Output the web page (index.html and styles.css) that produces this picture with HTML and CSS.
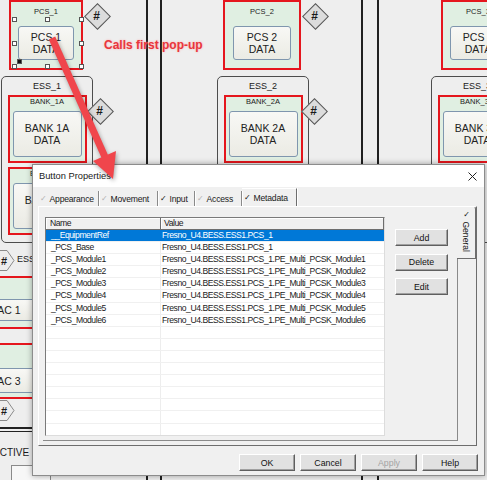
FILE: index.html
```html
<!DOCTYPE html>
<html lang="en">
<head>
    <meta charset="UTF-8" />
    <title>Button Properties</title>
    <link rel="stylesheet" href="styles.css">
</head>
<body>
<div class="hmi">
    <!-- canvas -->
    <div class="vline vline-a"></div>
    <div class="vline vline-b"></div>
    <div class="vline vline-c"></div>
    <div class="vline vline-d"></div>

    <div class="node pcs pcs-1">
        <div class="node-label">PCS_1</div>
        <div class="node-btn">PCS 1<br>DATA</div>
    </div>
    <div class="node pcs pcs-2">
        <div class="node-label">PCS_2</div>
        <div class="node-btn">PCS 2<br>DATA</div>
    </div>
    <div class="node pcs pcs-3">
        <div class="node-label">PCS_3</div>
        <div class="node-btn">PCS 3<br>DATA</div>
    </div>

    <div class="group ess-1">
        <div class="group-label">ESS_1</div>
        <div class="node bank">
            <div class="node-label">BANK_1A</div>
            <div class="node-btn">BANK 1A<br>DATA</div>
        </div>
        <div class="node bank">
            <div class="node-label">BANK_1B</div>
            <div class="node-btn">BANK 1B<br>DATA</div>
        </div>
    </div>
    <div class="group ess-2">
        <div class="group-label">ESS_2</div>
        <div class="node bank">
            <div class="node-label">BANK_2A</div>
            <div class="node-btn">BANK 2A<br>DATA</div>
        </div>
    </div>
    <div class="group ess-3">
        <div class="group-label">ESS_3</div>
        <div class="node bank">
            <div class="node-label">BANK_3A</div>
            <div class="node-btn">BANK 3A<br>DATA</div>
        </div>
    </div>

    <div class="diamond d-1"><span>#</span></div>
    <div class="diamond d-2"><span>#</span></div>
    <div class="diamond d-3"><span>#</span></div>
    <div class="diamond d-4"><span>#</span></div>

    <div class="handle h-tl"></div>
    <div class="handle h-tc"></div>
    <div class="handle h-tr"></div>
    <div class="handle h-ml"></div>
    <div class="handle h-mr"></div>
    <div class="handle h-bl"></div>
    <div class="handle h-bc"></div>
    <div class="handle h-br"></div>
    <div class="handle h-anchor"></div>

    <div class="note">Calls first pop-up</div>

    <div class="tag tag-1">
        <svg width="19" height="21" viewBox="0 0 19 21"><polygon points="0.5,0.5 11,0.5 18,10.5 11,20.5 0.5,20.5" fill="#ededed" stroke="#8a8a8a"/></svg>
        <span>#</span>
    </div>
    <div class="tag-text">ESS_1</div>
    <div class="node ac ac-1"><div class="node-btn">AC 1</div></div>
    <div class="node ac ac-3"><div class="node-btn">AC 3</div></div>
    <div class="tag tag-2">
        <svg width="19" height="21" viewBox="0 0 19 21"><polygon points="0.5,0.5 11,0.5 18,10.5 11,20.5 0.5,20.5" fill="#ededed" stroke="#8a8a8a"/></svg>
        <span>#</span>
    </div>
    <div class="hline"></div>
    <div class="status">ACTIVE</div>
    <div class="status-box"></div>

    <!-- dialog -->
    <div class="dialog">
        <div class="titlebar">
            <span>Button Properties</span>
            <svg class="close" width="9" height="9" viewBox="0 0 9 9"><path d="M0.5 0.5 L8.5 8.5 M8.5 0.5 L0.5 8.5" stroke="#222" stroke-width="1"/></svg>
        </div>
        <div class="tabs">
            <div class="tab tab-appearance"><i class="chk off">✓</i>Appearance</div>
            <div class="tab tab-movement"><i class="chk off">✓</i>Movement</div>
            <div class="tab tab-input"><i class="chk">✓</i>Input</div>
            <div class="tab tab-access"><i class="chk off">✓</i>Access</div>
            <div class="tab tab-metadata active"><i class="chk">✓</i>Metadata</div>
        </div>
        <div class="page">
            <div class="meta">
                <div class="list">
                    <div class="list-head">
                        <div class="col-name">Name</div>
                        <div class="col-value">Value</div>
                    </div>
                    <div class="rows"></div>
                </div>
                <div class="side-buttons">
                    <button class="win-btn">Add</button>
                    <button class="win-btn">Delete</button>
                    <button class="win-btn">Edit</button>
                </div>
            </div>
            <div class="vtabs">
                <div class="vtab"><i class="chk">✓</i> General</div>
            </div>
        </div>
        <div class="footer">
            <button class="win-btn">OK</button>
            <button class="win-btn">Cancel</button>
            <button class="win-btn disabled">Apply</button>
            <button class="win-btn">Help</button>
        </div>
    </div>

    <svg class="arrow" width="487" height="480" viewBox="0 0 487 480">
        <line x1="52" y1="38" x2="105" y2="157" stroke="#f0464c" stroke-width="7"/>
        <polygon points="116,151 93,161 113,179" fill="#f0464c"/>
    </svg>
</div>

<script>
    const metadata = [
        ["__EquipmentRef", "Fresno_U4.BESS.ESS1.PCS_1"],
        ["_PCS_Base", "Fresno_U4.BESS.ESS1.PCS_1"],
        ["_PCS_Module1", "Fresno_U4.BESS.ESS1.PCS_1.PE_Multi_PCSK_Module1"],
        ["_PCS_Module2", "Fresno_U4.BESS.ESS1.PCS_1.PE_Multi_PCSK_Module2"],
        ["_PCS_Module3", "Fresno_U4.BESS.ESS1.PCS_1.PE_Multi_PCSK_Module3"],
        ["_PCS_Module4", "Fresno_U4.BESS.ESS1.PCS_1.PE_Multi_PCSK_Module4"],
        ["_PCS_Module5", "Fresno_U4.BESS.ESS1.PCS_1.PE_Multi_PCSK_Module5"],
        ["_PCS_Module6", "Fresno_U4.BESS.ESS1.PCS_1.PE_Multi_PCSK_Module6"]
    ];
    const rows = document.querySelector(".rows");
    for (let i = 0; i < 17; i++) {
        const item = metadata[i] || ["", ""];
        rows.innerHTML += `
            <div class="row${i === 0 ? " selected" : ""}">
                <div class="cell-name">${item[0]}</div>
                <div class="cell-value">${item[1]}</div>
            </div>`;
    }
</script>
</body>
</html>
```

FILE: styles.css
```css
* {
    box-sizing: border-box;
}

body {
    margin: 0;
    width: 487px;
    height: 480px;
    overflow: hidden;
    font-family: "Liberation Sans", Arial, sans-serif;
    color: #1a1a1a;
    background-color: #eeeeee;
}

.hmi {
    position: relative;
    width: 487px;
    height: 480px;
    overflow: hidden;
    background-color: #eeeeee;
}

/* canvas lines */
.vline {
    position: absolute;
    top: 0;
    width: 2px;
    height: 480px;
    background-color: #202020;
}
.vline-a { left: 146px; }
.vline-b { left: 160px; }
.vline-c { left: 361px; }
.vline-d { left: 377px; }

/* red framed nodes */
.node {
    border: 2px solid #e5161d;
    background-color: #e0efe2;
    display: flex;
    flex-direction: column;
    align-items: center;
}

.node-label {
    font-size: 7.5px;
    line-height: 8px;
    color: #222;
}

.node-btn {
    display: flex;
    align-items: center;
    justify-content: center;
    text-align: center;
    border: 1px solid #7f96ae;
    border-radius: 3px;
    background: linear-gradient(#f8f8f5, #ebebe4);
    font-size: 10.5px;
    line-height: 12px;
    color: #222;
}

.pcs {
    position: absolute;
    top: 0;
    width: 74px;
    height: 70px;
    padding-top: 6px;
}
.pcs .node-btn {
    width: 56px;
    height: 34px;
    margin-top: 10px;
}
.pcs-1 { left: 9px; }
.pcs-2 { left: 223px; width: 78px; }
.pcs-2 .node-btn { width: 58px; }
.pcs-3 { left: 441px; }

.group {
    position: absolute;
    top: 76px;
    width: 92px;
    height: 167px;
    border: 1px solid #4d4d4d;
    border-radius: 5px;
    display: flex;
    flex-direction: column;
    align-items: center;
    gap: 4px;
    padding-top: 4px;
}
.group-label {
    font-size: 9px;
    line-height: 10px;
}
.ess-1 { left: 1px; }
.ess-2 { left: 217px; }
.ess-3 { left: 431px; }

.bank {
    flex-shrink: 0;
    width: 79px;
    height: 68px;
    padding-top: 1px;
}
.bank .node-btn {
    width: 69px;
    height: 46px;
    margin-top: 5px;
}

/* # diamonds */
.diamond {
    position: absolute;
    width: 25px;
    height: 25px;
    display: flex;
    align-items: center;
    justify-content: center;
    font-size: 12px;
    font-weight: bold;
}
.diamond::before {
    content: "";
    position: absolute;
    left: 4px;
    top: 4px;
    width: 17px;
    height: 17px;
    background-color: #dcdcdc;
    border: 1px solid #555;
    transform: rotate(45deg);
}
.diamond span { position: relative; }
.d-1 { left: 84px; top: 3px; }
.d-2 { left: 87px; top: 98px; }
.d-3 { left: 302px; top: 3px; }
.d-4 { left: 301px; top: 98px; }

/* selection handles */
.handle {
    position: absolute;
    width: 5px;
    height: 5px;
    border: 1px solid #555;
    background-color: #fff;
}
.h-tl { left: 12px; top: 17px; }
.h-tc { left: 45px; top: 17px; }
.h-tr { left: 79px; top: 17px; }
.h-ml { left: 12px; top: 41px; }
.h-mr { left: 79px; top: 41px; }
.h-bl { left: 12px; top: 64px; }
.h-bc { left: 45px; top: 64px; }
.h-br { left: 79px; top: 64px; }
.h-anchor { left: 17px; top: 59px; background-color: #111; }

.note {
    position: absolute;
    left: 104px;
    top: 38px;
    font-size: 12px;
    font-weight: bold;
    color: #e8363c;
    text-shadow: 0 0 2px rgba(255, 160, 160, 0.9);
}

/* left strip */
.tag {
    position: absolute;
    left: -4px;
    width: 19px;
    height: 21px;
    display: flex;
    align-items: center;
    padding-left: 5px;
    font-size: 11px;
    font-weight: bold;
}
.tag svg {
    position: absolute;
    left: 0;
    top: 0;
}
.tag span { position: relative; }
.tag-1 { top: 250px; }
.tag-2 { top: 400px; }

.tag-text {
    position: absolute;
    left: 17px;
    top: 254px;
    font-size: 9px;
}

.ac {
    position: absolute;
    left: -30px;
    width: 100px;
    align-items: flex-start;
}
.ac .node-btn {
    width: 58px;
    margin-left: 8px;
    border-radius: 0;
    font-size: 10.5px;
}
.ac-1 { top: 276px; height: 53px; padding-top: 21px; }
.ac-1 .node-btn { height: 22px; }
.ac-3 { top: 343px; height: 56px; padding-top: 23px; }
.ac-3 .node-btn { height: 25px; }

.hline {
    position: absolute;
    left: 0;
    top: 427px;
    width: 40px;
    height: 5px;
    border-top: 2px solid #222;
    border-bottom: 1px solid #222;
}

.status {
    position: absolute;
    left: -7px;
    top: 447px;
    font-size: 10px;
}

.status-box {
    position: absolute;
    left: 11px;
    top: 465px;
    width: 40px;
    height: 20px;
    border: 1px solid #8a8a8a;
    background-color: #f7f7f7;
}

/* dialog */
.dialog {
    position: absolute;
    left: 32px;
    top: 164px;
    width: 453px;
    height: 312px;
    background-color: #f0f0f0;
    border: 1px solid #8c8c8c;
    box-shadow: 0 0 6px rgba(0, 0, 0, 0.35);
    display: flex;
    flex-direction: column;
    font-size: 8.6px;
}

.titlebar {
    height: 22px;
    background-color: #fff;
    display: flex;
    align-items: center;
    justify-content: space-between;
    padding: 0 7px 0 6px;
    font-size: 9.3px;
}

.tabs {
    height: 19px;
    display: flex;
    align-items: flex-end;
    padding-left: 5px;
}

.tab {
    height: 15px;
    display: flex;
    align-items: center;
    padding-left: 2px;
    border-right: 1px solid #8a8a8a;
    box-shadow: 1px 0 0 #fff;
    white-space: nowrap;
    letter-spacing: -0.2px;
}
.tab-appearance { width: 61px; }
.tab-movement { width: 59px; }
.tab-input { width: 37px; }
.tab-access { width: 47px; }
.tab-metadata { width: 55px; }
.tab.active {
    height: 18px;
    border-top: 1px solid #fff;
    border-right: 1px solid #6d6d6d;
}

.chk {
    font-style: normal;
    font-family: "DejaVu Sans", sans-serif;
    font-size: 8px;
    margin-right: 3px;
    color: #111;
}
.chk.off { color: #b0b0b0; }

.page {
    flex-shrink: 0;
    height: 240px;
    width: 439px;
    margin-left: 5px;
    border: 1px solid #fff;
    border-right-color: #6d6d6d;
    border-bottom-color: #6d6d6d;
    display: flex;
    padding: 0 0 4px 4px;
}

.meta {
    width: 415px;
    border-right: 1px solid #8a8a8a;
    border-bottom: 1px solid #8a8a8a;
    display: flex;
    gap: 10px;
    padding: 10px 0 0 2px;
}

.list {
    width: 340px;
    height: 219px;
    border: 1px solid #7a7a7a;
    border-right-color: #dcdcdc;
    border-bottom-color: #dcdcdc;
    background-color: #fff;
    overflow: hidden;
    font-size: 8.6px;
    letter-spacing: -0.45px;
}

.list-head {
    display: flex;
    height: 12px;
}
.list-head div {
    background-color: #f0f0f0;
    border-right: 1px solid #6d6d6d;
    border-bottom: 1px solid #6d6d6d;
    box-shadow: inset 1px 1px 0 #fff;
    line-height: 11px;
    padding-left: 4px;
}
.list-head .col-name { width: 115px; }
.list-head .col-value { flex: 1; padding-left: 3px; }

.row {
    display: flex;
    height: 12.1px;
    line-height: 11px;
    border-bottom: 1px solid #f0f0f0;
    white-space: nowrap;
}
.cell-name {
    width: 115px;
    padding-left: 5px;
    border-right: 1px solid #ededed;
}
.cell-value {
    flex: 1;
    padding-left: 1px;
}
.row.selected {
    background-color: #0078d7;
    color: #fff;
}
.row.selected .cell-name {
    border-right-color: #0078d7;
}

.side-buttons {
    display: flex;
    flex-direction: column;
    gap: 7.5px;
    margin-top: 12px;
}

.win-btn {
    width: 53px;
    height: 17px;
    padding: 0;
    font-family: "Liberation Sans", Arial, sans-serif;
    font-size: 8.8px;
    color: #111;
    background-color: #e1e1e1;
    border: 1px solid #fff;
    border-right-color: #5f5f5f;
    border-bottom-color: #5f5f5f;
    box-shadow: inset -1px -1px 0 #a0a0a0;
}
.win-btn.disabled { color: #a3a3a3; }

.vtabs {
    width: 18px;
    margin-left: -1px;
}

.vtab {
    width: 19px;
    height: 53px;
    margin-top: -1px;
    background-color: #f0f0f0;
    border: 1px solid #fff;
    border-left: none;
    border-right-color: #6d6d6d;
    border-bottom-color: #6d6d6d;
    border-top-right-radius: 3px;
    writing-mode: vertical-rl;
    font-size: 8.6px;
    line-height: 17px;
    padding-top: 3px;
}
.vtab .chk { margin-right: 0; }

.footer {
    display: flex;
    justify-content: flex-end;
    gap: 5px;
    padding: 8px 6px 0 0;
}
.footer .win-btn { width: 56px; }

.arrow {
    position: absolute;
    left: 0;
    top: 0;
    pointer-events: none;
    filter: drop-shadow(1px 2px 2px rgba(0, 0, 0, 0.35));
}
```
